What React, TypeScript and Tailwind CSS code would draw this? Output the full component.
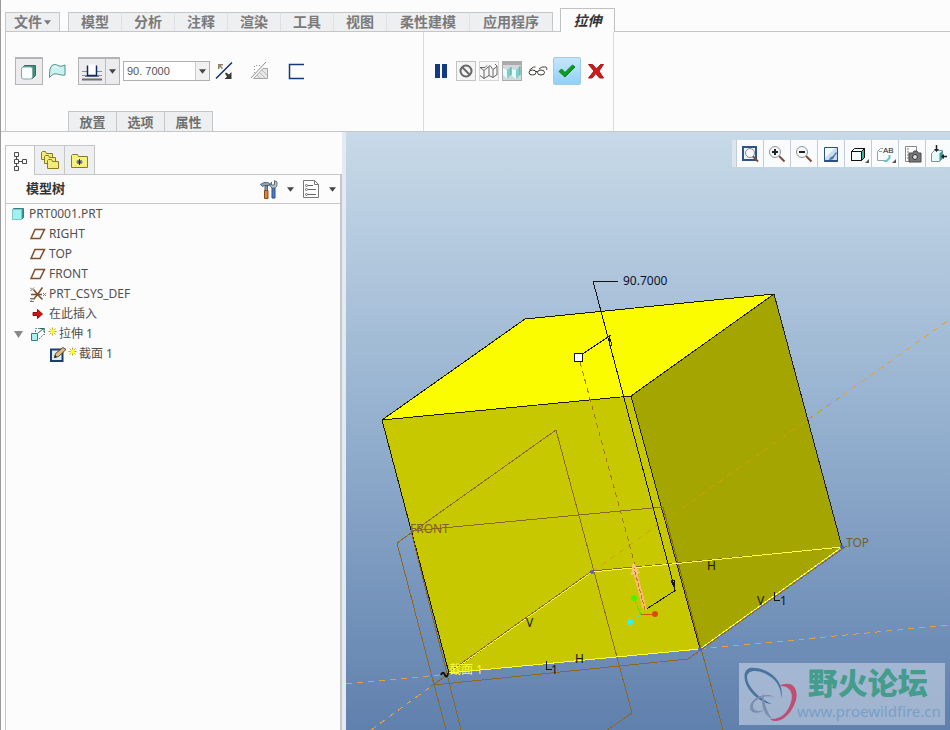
import type { ReactNode } from 'react';

import clsx from 'clsx';

const menuTabs = [
  '模型',
  '分析',
  '注释',
  '渲染',
  '工具',
  '视图',
  '柔性建模',
  '应用程序',
];

const panelTabs = ['放置', '选项', '属性'];

function Caret({ className }: { className?: string }) {
  return (
    <svg
      aria-hidden
      className={clsx('shrink-0', className)}
      height="5"
      viewBox="0 0 8 5"
      width="7"
    >
      <path d="M0 0h8L4 5z" fill="currentColor" />
    </svg>
  );
}

function Icon({
  children,
  width = 20,
  height = 20,
}: {
  children: ReactNode;
  width?: number;
  height?: number;
}) {
  return (
    <svg
      aria-hidden
      className="shrink-0"
      fill="none"
      height={height}
      viewBox={`0 0 ${width} ${height}`}
      width={width}
    >
      {children}
    </svg>
  );
}

function SolidIcon() {
  return (
    <Icon>
      <path d="M3.500 5.500l2-2h11v10l-3 3z" fill="#3f8f80" stroke="#2e6f6b" />
      <rect
        fill="#fbfffe"
        height="12"
        rx="2"
        stroke="#7fa9a6"
        width="11"
        x="2.500"
        y="5"
      />
    </Icon>
  );
}

function SurfaceIcon() {
  return (
    <Icon>
      <path
        d="M2.500 16.500c0-4 0-8 1.500-11 3-3 5-2 7-1 2 1 4 1 7-.5v10c-5 1-9-3-13 0z"
        fill="#c9f1ef"
        stroke="#4f8f8c"
      />
      <path d="M5 7c3-2 5-1 7 0" stroke="#effffe" />
    </Icon>
  );
}

function DepthIcon() {
  return (
    <Icon width={22}>
      <path d="M1 9.500h5M16 9.500h5M1 13.500h5M16 13.500h5" stroke="#8b8b8b" />
      <path d="M1 17.500h20" stroke="#6c6e72" strokeWidth="2" />
      <path d="M4 14.500h14" stroke="#6d7990" />
      <path d="M6.500 3.500v10h9v-10" fill="#fff" stroke="#0d2a66" strokeWidth="1.500" />
      <path d="M7.500 3h7" stroke="#fff" />
    </Icon>
  );
}

function FlipIcon() {
  return (
    <Icon>
      <path d="M2 17.500L18 1.500" stroke="#0c2c6b" strokeWidth="1.500" />
      <path d="M4 3h5v1.500H6.500L9 7 8 8 5.500 5.500V8H4z" fill="#8d7f66" />
      <path d="M17.500 11v7h-7l2.500-2.500-2-3 1-1 3 2z" fill="#3a3a3a" />
    </Icon>
  );
}

function RemoveMaterialIcon() {
  return (
    <Icon>
      <path d="M4.500 12V4.500H12" stroke="#999" strokeDasharray="1 2" />
      <path d="M3.500 17.500l9.500-10h4.500v10z" fill="#e6e6e6" stroke="#a5a5a5" />
      <path
        d="M7 14l3 3M9.500 11.500l5.500 5.500M12 9l5 5"
        stroke="#bcbcbc"
      />
      <path d="M1 17L16 1" stroke="#8d8d8d" />
    </Icon>
  );
}

function ThickenIcon() {
  return (
    <Icon>
      <path d="M18 3.500H3.500v14H18" stroke="#123a75" strokeWidth="1.500" />
    </Icon>
  );
}

function PauseIcon() {
  return (
    <Icon width={14} height={14}>
      <path d="M1 0h5v14H1zM8 0h5v14H8z" fill="#123a80" />
    </Icon>
  );
}

function NoPreviewIcon() {
  return (
    <Icon width={18} height={18}>
      <circle cx="9" cy="9" r="5.500" stroke="#666" strokeWidth="2" />
      <path d="M5 5l8 8" stroke="#666" strokeWidth="2" />
    </Icon>
  );
}

function UnattachedIcon() {
  return (
    <Icon width={18} height={18}>
      <path
        d="M0 5.500h5l2-2M0 5.500l4 3v8l-4-3M4 8.500l6-5M4 16.500l5-3V5M10 3.500l3 4v8l-4-2M13 7.500l4-3M13 15.500l4-3M15 2l2 2v9"
        stroke="#666"
      />
    </Icon>
  );
}

function AttachedIcon() {
  return (
    <Icon width={18} height={15}>
      <path d="M0 3l4 2 4-3v8l-4 4-4-4z" fill="#7fcfc9" />
      <path d="M0 3l4 2v9l-4-4z" fill="#e4fffd" />
      <path d="M9 4l4 1 4-4v9l-4 4-4-3z" fill="#7fcfc9" />
      <path d="M9 4l4 1v9l-4-3z" fill="#e4fffd" />
      <path d="M8 2v8M17 1v9" stroke="#5fa5a0" />
    </Icon>
  );
}

function GlassesIcon() {
  return (
    <Icon>
      <path
        d="M1.500 9l4-3h2M11 8l3-2h4c1 0 1 2 .5 3"
        stroke="#4a4540"
      />
      <ellipse cx="4.500" cy="11.500" rx="3.500" ry="2.500" stroke="#3a3530" />
      <ellipse cx="13" cy="11.500" rx="3.500" ry="2.500" stroke="#3a3530" />
      <path d="M8 10.500h1.500" stroke="#3a3530" />
    </Icon>
  );
}

function CheckIcon() {
  return (
    <Icon>
      <path
        d="M2 10.500l2.500-2.500L8 11.500 15.500 4 18 6 8 16z"
        fill="#0d9c22"
        stroke="#078019"
      />
    </Icon>
  );
}

function CancelIcon() {
  return (
    <Icon>
      <path
        d="M2.500 3.500h4l4 4.500 4-4.500h3L13 10l4.500 7h-4L10 12.500 6 17H2.500L8 10z"
        fill="#cf1a1a"
        stroke="#a81818"
      />
    </Icon>
  );
}

function TreeTabIcon() {
  return (
    <Icon>
      <path
        d="M4.500 1.500h4v4h-4zM4.500 8.500h4v4h-4zM4.500 15.500h4v4h-4zM12.500 8.500h4v4h-4zM6.500 6v2M6.500 13v2M9 10.500h3"
        stroke="#4a4a4a"
      />
    </Icon>
  );
}

function FoldersIcon() {
  return (
    <Icon>
      <g fill="#f1ec7b" stroke="#8a7b22">
        <path d="M1.500 9.500v-7l1-1h3l1 2h6v6z" />
        <path d="M4.500 13.500v-7l1-1h3l1 2h6v6z" />
        <path d="M7.500 18.500v-8l1-1h3l1 2h6v7z" />
      </g>
    </Icon>
  );
}

function FavoritesIcon() {
  return (
    <Icon>
      <path
        d="M1.500 17.500v-12l1-1h5l1 2h9v11z"
        fill="#f7f27c"
        stroke="#8a7b22"
      />
      <path
        d="M9.500 9v6M6.500 12h6M7.500 10l4 4M11.500 10l-4 4"
        stroke="#1d2a7a"
      />
    </Icon>
  );
}

function ToolsIcon() {
  return (
    <Icon>
      <path
        d="M1.500 5.500c2-2 7-3 9-1v2h-5l-2 1z"
        fill="#8fa0b0"
        stroke="#506376"
      />
      <path d="M6 7h2.500v5H6z" fill="#93989c" stroke="#5c6266" />
      <path d="M5.500 11.500h3.500v8H5.500z" fill="#d98536" stroke="#8c4a12" />
      <path d="M13 9h3v10h-3z" fill="#4a80d0" stroke="#27498a" />
      <path
        d="M13 9c-2-1-2-4-.5-6v3h3V1.500L18 3v2.500c0 2-1 3-2 3.500z"
        fill="#b9c4cf"
        stroke="#5f6f80"
      />
    </Icon>
  );
}

function SettingsListIcon() {
  return (
    <Icon>
      <path
        d="M2.500 1.500h11l4 4v13h-15z"
        fill="#fff"
        stroke="#777"
      />
      <path d="M13.500 1.500v4h4" stroke="#777" />
      <path d="M7 6.500h5M7 10.500h8M7 15.500h8" stroke="#666" />
      <circle cx="5.500" cy="6.500" r="1" stroke="#666" />
      <circle cx="5.500" cy="10.500" r="1" stroke="#666" />
      <circle cx="5.500" cy="15.500" r="1" stroke="#666" />
    </Icon>
  );
}

function PartIcon() {
  return (
    <Icon width={14} height={14}>
      <path d="M1.500 3.500l1-2h10v9l-2 2z" fill="#3d8e92" stroke="#3c7d80" />
      <rect
        fill="#9df3f1"
        height="10"
        stroke="#7ec9ca"
        width="9"
        x="1.500"
        y="2.500"
      />
    </Icon>
  );
}

function PlaneIcon() {
  return (
    <Icon width={16} height={16}>
      <path
        d="M5 3.500h9.500L10 12.500H1z"
        stroke="#7d4e2b"
        strokeWidth="1.500"
      />
    </Icon>
  );
}

function CsysIcon() {
  return (
    <Icon width={16} height={16}>
      <path
        d="M1 8.500h11M7.500 8.500l-4-5M7.500 8.500l5-7M7.500 8.500l-4 5M7.500 8.500l5 5"
        stroke="#7d4e2b"
        strokeWidth="1.500"
      />
      <path
        d="M0 1.500l2 2 2-2M2 3.500L.5 5M0 12.500h3l-3 3h4M13 7l3 3M16 7l-3 3"
        stroke="#777"
      />
    </Icon>
  );
}

function InsertIcon() {
  return (
    <Icon width={16} height={16}>
      <path
        d="M3 6.500h4.500v-3l5 4.500-5 4.500v-3H3z"
        fill="#d31414"
        stroke="#901010"
      />
    </Icon>
  );
}

function ExtrudeIcon() {
  return (
    <Icon width={16} height={16}>
      <path
        d="M5.500 6V2.500h9V9M9 13l5-5"
        stroke="#6a8a88"
        strokeDasharray="2 1"
      />
      <path d="M1.500 7.500h6v7h-6z" fill="#a9f0ee" stroke="#337f7d" />
      <path d="M8 7l5-4M10 2.500h4V6" stroke="#2d6664" />
    </Icon>
  );
}

function SketchIcon() {
  return (
    <Icon width={16} height={16}>
      <path
        d="M1 3.500h11.500V15H1z"
        fill="#d9ecf7"
        stroke="#1d3c70"
        strokeWidth="2"
      />
      <path d="M4.500 11.500l1-4 7.500-6 3 2-7.500 7z" fill="#e0bc7c" stroke="#5e4a2c" />
      <path d="M4 12l1-3 2 2z" fill="#222" />
    </Icon>
  );
}

function StarMark() {
  return (
    <Icon width={9} height={16}>
      <path
        d="M4.500 1.500v8M.5 5.500h8M1.500 2.500l6 6M7.500 2.500l-6 6"
        stroke="#b5ab10"
      />
      <path d="M2.500 3.500h4v4h-4z" fill="#fbff1a" />
    </Icon>
  );
}

function Lens({ mark }: { mark?: string }) {
  return (
    <>
      <path d="M12 12l5.500 5.500" stroke="#7a4c33" strokeWidth="2" />
      <circle cx="8" cy="8" fill="#f2f7fa" r="5.500" stroke="#8f9498" />
      {mark && <path d={mark} stroke="#222" strokeWidth="2" />}
    </>
  );
}

const viewTools: { label: string; menu?: boolean; icon: ReactNode }[] = [
  {
    label: '重新调整',
    icon: (
      <Icon>
        <path
          d="M3 3h13v13H3z"
          fill="#eef4fb"
          stroke="#2f5288"
          strokeWidth="2"
        />
        <circle cx="10" cy="9" fill="#f8fbfd" r="4.500" stroke="#858b92" />
        <path d="M13 12.500l5 5" stroke="#7a4c33" strokeWidth="2" />
      </Icon>
    ),
  },
  {
    label: '放大',
    icon: (
      <Icon>
        <Lens mark="M8 5v6M5 8h6" />
      </Icon>
    ),
  },
  {
    label: '缩小',
    icon: (
      <Icon>
        <Lens mark="M5 8h6" />
      </Icon>
    ),
  },
  {
    label: '重画',
    icon: (
      <Icon>
        <path d="M3.500 3.500h13v14h-13z" fill="#c5dcf2" stroke="#2d4f88" />
        <path d="M3.500 17h13" stroke="#2d4f88" strokeWidth="2" />
        <path d="M4 4h10L4 14z" fill="#f4f9fd" />
        <path d="M8 16c1-3 2-3 4-4l3-4 1 1-3 4c0 2-2 3-5 3z" fill="#56789f" />
      </Icon>
    ),
  },
  {
    label: '显示样式',
    menu: true,
    icon: (
      <Icon>
        <path
          d="M3.500 7.500l3-3h10v9l-3 3h-10z"
          fill="#f4fbfb"
          stroke="#111"
        />
        <path d="M13.500 7.500l3-3v9l-3 3z" fill="#3fb09a" />
        <path
          d="M3.500 7.500h10v9h-10zM13.500 7.500l3-3v9l-3 3"
          stroke="#111"
        />
      </Icon>
    ),
  },
  {
    label: '已命名视图',
    menu: true,
    icon: (
      <Icon>
        <path d="M2.500 16.500v-9l3-3H8M2.500 16.500H9M4 7.500h3" stroke="#8fa5a4" />
        <path d="M14.500 11v3l-3 3H9" stroke="#6fc2bc" strokeWidth="2" />
        <text
          fill="#222"
          fontFamily="Liberation Sans, sans-serif"
          fontSize="8"
          x="8"
          y="9"
        >
          AB
        </text>
      </Icon>
    ),
  },
  {
    label: '视图管理器',
    icon: (
      <Icon>
        <path d="M3.500 17.500v-15h11V8" fill="#fff" stroke="#888" />
        <path d="M3.500 17.500H7" stroke="#888" />
        <path d="M5 5h2M5 8h2M5 11h2M5 14h2" stroke="#777" />
        <path d="M7 9h4l1-2h3l1 2h3v9H7z" fill="#777" stroke="#4b4b4b" />
        <circle cx="13" cy="13" fill="#ddd" r="2.500" stroke="#333" />
      </Icon>
    ),
  },
  {
    label: '基准显示',
    icon: (
      <Icon>
        <path
          d="M2.500 9.500l3-3h8v8l-3 3h-8z"
          fill="#eafafa"
          stroke="#7a9695"
        />
        <path d="M10.500 9.500l3-3v8l-3 3z" fill="#3f9b95" />
        <path d="M7.500 1v5M13 12.500h5" stroke="#222" strokeWidth="1.500" />
        <path d="M5 5h5L7.500 8zM15 10v5l-3-2.500z" fill="#222" />
      </Icon>
    ),
  },
];

function MenuBar() {
  return (
    <nav className="flex items-end pt-2 pl-1">
      <button
        className="flex h-[19px] w-[55px] items-center justify-center gap-0.5 border border-b-0 border-[#c4c6c8] bg-[#eeeff1] text-sm font-bold text-[#7a7a7a]"
        type="button"
      >
        文件
        <Caret />
      </button>
      <div className="ml-2 flex border-l border-[#c4c6c8] bg-[#eeeff1]">
        {menuTabs.map((tab) => (
          <button
            className={clsx(
              'h-[19px] border-t border-r border-t-[#c4c6c8] border-r-[#dfe0e4] text-sm leading-[18px] font-bold text-[#7a7a7a] last:border-r-[#c4c6c8]',
              tab.length > 2 ? 'w-[83px]' : 'w-[53px]',
            )}
            key={tab}
            type="button"
          >
            {tab}
          </button>
        ))}
      </div>
      <button
        className="relative z-10 -mb-px ml-[7px] h-6 w-[55px] border border-b-0 border-[#bfc1c3] bg-[#fcfcfc] text-sm font-bold text-[#333] italic"
        type="button"
      >
        拉伸
      </button>
    </nav>
  );
}

function ToolButton({
  label,
  className,
  children,
}: {
  label: string;
  className?: string;
  children: ReactNode;
}) {
  return (
    <button
      aria-label={label}
      className={clsx('flex shrink-0 items-center justify-center', className)}
      type="button"
    >
      {children}
    </button>
  );
}

function Dashboard() {
  return (
    <section className="ml-1 flex h-[100px] border-t border-l border-[#c4c6c8]">
      <div className="flex w-[418px] flex-col justify-between border-r border-[#d9dadb] pt-[25px]">
        <div className="flex items-center pl-[9px]">
          <ToolButton
            className="size-7 border border-t-2 border-[#b4b4b4] bg-[#ececee]"
            label="实体"
          >
            <SolidIcon />
          </ToolButton>
          <ToolButton className="size-7" label="曲面">
            <SurfaceIcon />
          </ToolButton>
          <div className="ml-[7px] flex h-7 border border-t-2 border-[#b4b4b4] bg-[#ececee]">
            <ToolButton className="w-[26px]" label="深度">
              <DepthIcon />
            </ToolButton>
            <ToolButton
              className="w-[14px] border-l border-[#bbb] text-[#444]"
              label="深度选项"
            >
              <Caret />
            </ToolButton>
          </div>
          <div className="ml-[3px] flex h-5 w-[87px] border border-[#b0b0b0] bg-white">
            <input
              aria-label="深度值"
              className="w-full min-w-0 pl-[3px] font-['Liberation_Sans',sans-serif] text-[11px] text-[#555] outline-none"
              defaultValue="90. 7000"
              type="text"
            />
            <ToolButton
              className="w-[14px] border-l border-[#ccc] bg-[#f1f1f1] text-[#444]"
              label="最近的值"
            >
              <Caret />
            </ToolButton>
          </div>
          <ToolButton className="ml-1 size-5" label="反向">
            <FlipIcon />
          </ToolButton>
          <ToolButton className="ml-4 size-5" label="移除材料">
            <RemoveMaterialIcon />
          </ToolButton>
          <ToolButton className="ml-4 size-5" label="加厚草绘">
            <ThickenIcon />
          </ToolButton>
        </div>
        <div className="ml-[62px] flex self-start border-l border-[#c4c6c8]">
          {panelTabs.map((tab) => (
            <button
              className="h-5 w-12 border-t border-r border-[#c4c6c8] bg-[#eeeff1] text-[13px] leading-[18px] font-bold text-[#6f6f6f]"
              key={tab}
              type="button"
            >
              {tab}
            </button>
          ))}
        </div>
      </div>
      <div className="flex w-[190px] items-start border-r border-[#d9dadb] pt-[25px]">
        <div className="flex h-7 items-center pl-[10px]">
          <ToolButton className="w-[14px]" label="暂停">
            <PauseIcon />
          </ToolButton>
          <div className="ml-2 flex gap-[3px]">
            <ToolButton
              className="size-5 border border-[#c2c2c2] bg-[#f5f5f5]"
              label="无预览"
            >
              <NoPreviewIcon />
            </ToolButton>
            <ToolButton
              className="size-5 border border-[#d5d5d5] bg-[#f8f8f8]"
              label="分离"
            >
              <UnattachedIcon />
            </ToolButton>
            <ToolButton
              className="size-5 border border-t-4 border-[#a9abad] bg-[#d5d8da]"
              label="连接"
            >
              <AttachedIcon />
            </ToolButton>
          </div>
          <ToolButton className="ml-1.5 size-5" label="特征预览">
            <GlassesIcon />
          </ToolButton>
          <ToolButton
            className="ml-[5px] size-7 rounded-xs border border-[#9ecbe8] bg-linear-to-b from-[#c6e6fb] to-[#91d0f6]"
            label="确定"
          >
            <CheckIcon />
          </ToolButton>
          <ToolButton className="ml-[5px] size-5" label="取消">
            <CancelIcon />
          </ToolButton>
        </div>
      </div>
    </section>
  );
}

function TreeRow({
  icon,
  label,
  level = 1,
  starred = false,
}: {
  icon: ReactNode;
  label: string;
  level?: number;
  starred?: boolean;
}) {
  return (
    <li
      className={clsx(
        'flex h-5 items-center',
        level === 0 && 'gap-1 pl-[5px]',
        level === 1 && 'pl-6',
        level === 2 && 'pl-11',
        level > 0 && (starred ? 'gap-0.5' : 'gap-[3px]'),
      )}
    >
      {icon}
      {starred && <StarMark />}
      <span>{label}</span>
    </li>
  );
}

function ModelTree() {
  return (
    <aside className="flex w-[345px] shrink-0 flex-col border-r-4 border-[#e3eaf1] pt-[13px] pl-1">
      <div className="flex">
        <ToolButton
          className="relative -mb-px h-[30px] w-[30px] border border-b-0 border-[#c4c6c8] bg-[#fcfcfc]"
          label="模型树"
        >
          <TreeTabIcon />
        </ToolButton>
        <ToolButton
          className="h-[29px] w-[30px] border-t border-r border-[#c4c6c8] bg-[#eeeff1]"
          label="文件夹浏览器"
        >
          <FoldersIcon />
        </ToolButton>
        <ToolButton
          className="h-[29px] w-[30px] border-t border-r border-[#c4c6c8] bg-[#eeeff1]"
          label="收藏夹"
        >
          <FavoritesIcon />
        </ToolButton>
      </div>
      <div className="flex flex-1 flex-col border border-r-2 border-b-0 border-[#c4c6c8]">
        <header className="flex h-[29px] items-center border-b border-[#c4c6c8] pr-1 pl-5">
          <h1 className="flex-1 text-[13px] font-bold text-[#333]">模型树</h1>
          <button
            aria-label="设置"
            className="flex items-center gap-2 text-[#444]"
            type="button"
          >
            <ToolsIcon />
            <Caret />
          </button>
          <button
            aria-label="显示"
            className="ml-[7px] flex items-center gap-2 text-[#444]"
            type="button"
          >
            <SettingsListIcon />
            <Caret />
          </button>
        </header>
        <ul className="text-xs text-[#505050]">
          <TreeRow icon={<PartIcon />} label="PRT0001.PRT" level={0} />
          <TreeRow icon={<PlaneIcon />} label="RIGHT" />
          <TreeRow icon={<PlaneIcon />} label="TOP" />
          <TreeRow icon={<PlaneIcon />} label="FRONT" />
          <TreeRow icon={<CsysIcon />} label="PRT_CSYS_DEF" />
          <TreeRow icon={<InsertIcon />} label="在此插入" />
          <li className="flex h-5 items-center pl-2">
            <button
              aria-expanded
              aria-label="折叠"
              className="mr-[7px] text-[#888]"
              type="button"
            >
              <svg height="7" viewBox="0 0 9 7" width="9">
                <path d="M0 0h9L4.500 7z" fill="currentColor" />
              </svg>
            </button>
            <span className="flex items-center gap-0.5">
              <ExtrudeIcon />
              <StarMark />
              拉伸 1
            </span>
          </li>
          <TreeRow icon={<SketchIcon />} label="截面 1" level={2} starred />
        </ul>
      </div>
    </aside>
  );
}

// Scene coordinates are window pixels, so the viewBox starts at the canvas origin.
function Scene() {
  return (
    <svg
      aria-label="拉伸预览"
      className="block h-auto w-full"
      fill="none"
      fontFamily="'Noto Sans', 'Noto Sans CJK SC', sans-serif"
      fontSize="12"
      role="img"
      shapeRendering="crispEdges"
      viewBox="346 132 604 598"
    >
      <g stroke="#1c1c00" strokeLinejoin="round">
        <path d="M525 319L774 294 631 396 382 420z" fill="#fcfc00" />
        <path d="M382 420L631 396 700 649 449 673z" fill="#c8c800" />
        <path d="M631 396L774 294 842 547 700 649z" fill="#a5a500" />
      </g>

      <g stroke="#e3a044" strokeDasharray="6 5">
        <path d="M371 730L433 685M843 395L950 319" />
        <path d="M346 684L449 674M700 649L950 625" />
        <path d="M655 527L843 395" stroke="#c69c10" />
        <path d="M592 572L655 527" stroke="#c8ad10" />
      </g>

      <g stroke="#8b6826">
        <path d="M446 730L397 543 556 430 632 713 607 730" />
        <path d="M461 730L411 531 663 507 723 730" />
        <path d="M433 685L592 571 845 547 688 659z" />
        <path d="M580 362L635 565" stroke="#a37316" strokeDasharray="5 4" />
      </g>

      <path d="M592 572L842 547 700 649 449 673z" stroke="#ffff3c" />
      <path d="M592 571L449 672" stroke="#8b6826" />

      <g stroke="#111">
        <path d="M618 281H593L675 590M578 357L611 335M645 610L676 590" />
        <path d="M609 336l3 9-3 1zM675 589l-4-8 3-1z" />
        <path d="M574 353h8v8h-8z" fill="#fff" />
      </g>

      <path d="M645 610L635 572" stroke="#f8bd6c" strokeWidth="4" />
      <path d="M633 562l7 11-9 2z" fill="#fcc478" />
      <path d="M645 610L634 568" stroke="#c07828" strokeDasharray="4 2" />

      <path d="M641 615l14-1" stroke="#d65300" />
      <path d="M641 615l-7-17" stroke="#50e000" strokeDasharray="3 1" />
      <path d="M641 615l-11 7" stroke="#3ee8c0" />
      <g shapeRendering="auto">
        <circle cx="655" cy="614" fill="#dc4b00" r="3" />
        <circle cx="634" cy="598" fill="#50f000" r="3" />
        <circle cx="630" cy="622" fill="#2ef5e4" r="3" />
        <circle cx="592" cy="572" fill="#5560c0" r="2" />
        <circle cx="700" cy="649" fill="#5560c0" r="2" />
        <circle cx="842" cy="547" fill="#4a5ad0" r="2" />
        <path
          d="M441 675c1-3 3-3 4 0s3 1 3-2"
          stroke="#111"
          strokeWidth="2"
        />
      </g>

      <text fill="#101030" x="623" y="285">
        90.7000
      </text>
      <g fill="#7f5c2c">
        <text x="410" y="533">
          FRONT
        </text>
        <text x="846" y="547">
          TOP
        </text>
      </g>
      <text fill="#f8f83a" x="449" y="674">
        截面 1
      </text>
      <g fill="#15150a">
        <text x="526" y="627">
          V
        </text>
        <text x="575" y="663">
          H
        </text>
        <text x="707" y="570">
          H
        </text>
        <text x="757" y="605">
          V
        </text>
        <text x="551" y="674">
          1
        </text>
        <text x="780" y="605">
          1
        </text>
      </g>
      <path d="M546.500 661v8h5M774.500 592v8h5" stroke="#15150a" />
    </svg>
  );
}

function ViewToolbar() {
  return (
    <div className="absolute top-2 right-0 flex h-[27px] w-[218px] overflow-hidden border-l-4 border-[#dce6ef] bg-[#fafbfc]">
      {viewTools.map((tool) => (
        <ToolButton
          className="relative w-[27px] border-l border-[#c3ccd6]"
          key={tool.label}
          label={tool.label}
        >
          {tool.icon}
          {tool.menu && (
            <svg
              aria-hidden
              className="absolute right-0.5 bottom-1"
              height="4"
              viewBox="0 0 4 4"
              width="4"
            >
              <path d="M4 0v4H0z" fill="#555" />
            </svg>
          )}
        </ToolButton>
      ))}
    </div>
  );
}

function Watermark() {
  return (
    <div className="absolute right-[5px] bottom-[5px] flex h-[62px] w-[206px] items-center bg-[#c9d5e6]/60 pl-0.5">
      <svg
        aria-hidden
        className="shrink-0"
        fill="none"
        height="58"
        viewBox="0 0 56 58"
        width="56"
      >
        <path
          d="M40 34C45 14 24 1 9 3c-8 2-7 15 1 24 6 7 14 12 21 12C18 34 6 21 6 12 6 5 16 4 25 9c10 5 16 14 15 25z"
          fill="#47759f"
        />
        <path
          d="M38 21c14-7 21 4 16 17-5 14-18 22-25 16 10 1 18-6 21-17 3-10-2-17-12-16z"
          fill="#c04d72"
        />
        <path
          d="M34 32c-10-6-26 2-25 11 1 6 9 6 14 2-6 2-11 1-11-4 0-6 11-12 22-9zM22 28c-3 9 0 22 9 26-5-7-8-16-9-26z"
          fill="#7c8db0"
        />
      </svg>
      <div className="flex flex-col text-right">
        <span className="pr-[13px] font-['Liberation_Sans','Noto_Sans_CJK_SC',sans-serif] text-[30px] leading-[34px] font-black text-[#449c8c]">
          野火论坛
        </span>
        <a
          className="font-['Noto_Sans',sans-serif] text-[15px] leading-5 text-[#789fc8]"
          href="#forum"
        >
          www.proewildfire.cn
        </a>
      </div>
    </div>
  );
}

export default function App() {
  return (
    <div className="flex min-h-screen flex-col border-l border-[#9a9a9a] bg-[#fcfcfc] font-['Noto_Sans','Noto_Sans_CJK_SC',sans-serif]">
      <MenuBar />
      <Dashboard />
      <div className="flex flex-1 border-t border-[#c4c6c8]">
        <ModelTree />
        <main className="relative min-w-0 flex-1 bg-linear-to-b from-[#c8dae8] via-[#93afce] to-[#6080ad]">
          <Scene />
          <ViewToolbar />
          <Watermark />
        </main>
      </div>
    </div>
  );
}
